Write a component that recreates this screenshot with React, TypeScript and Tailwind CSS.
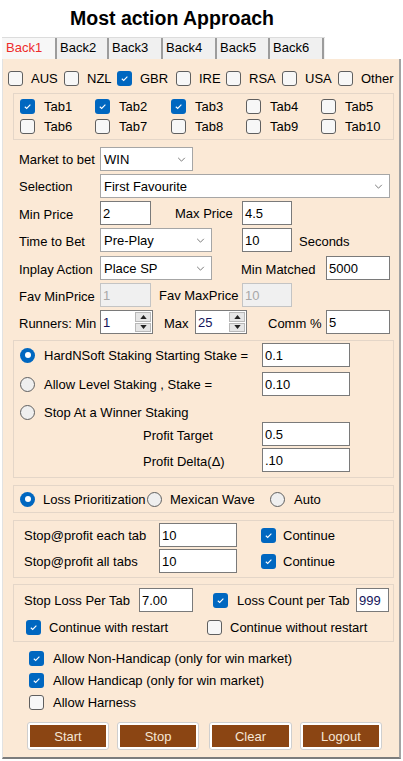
import { FC, ReactNode } from "react"

const Check: FC<{ checked?: boolean }> = ({ checked }) => checked
    ? <span className="flex h-[15px] w-[15px] shrink-0 items-center justify-center rounded-[3px] bg-[#0067c0]">
        <svg viewBox="0 0 10 10" className="h-[9px] w-[9px]"><path d="M2 5.3 L4.1 7.2 L8.2 2.9" fill="none" stroke="white" strokeWidth="1.2" /></svg>
    </span>
    : <span className="h-[15px] w-[15px] shrink-0 rounded-[3px] border border-[#5f5f5f] bg-[#f7f7f7]" />

const Radio: FC<{ checked?: boolean }> = ({ checked }) => checked
    ? <span className="flex h-[15px] w-[15px] shrink-0 items-center justify-center rounded-full bg-[#0067c0]">
        <span className="h-[6px] w-[6px] rounded-full bg-white" />
    </span>
    : <span className="h-[15px] w-[15px] shrink-0 rounded-full border border-[#5f5f5f] bg-[#efefef]" />

const TextBox: FC<{ value: string, className: string, disabled?: boolean }> = ({ value, className, disabled }) =>
    <div className={`flex h-[24px] shrink-0 items-center pl-[2px] ${disabled ? "border border-[#c4c4c4] bg-[#f0f0f0] text-[#a8a8a8]" : "border border-[#7a7a7a] bg-white"} ${className}`}>
        {value}
    </div>

const Chevron = () => <svg viewBox="0 0 10 6" className="h-[5px] w-[9px]"><path d="M1 1 L5 5 L9 1" fill="none" stroke="#606060" strokeWidth="1" /></svg>

const Combo: FC<{ value: string, className: string }> = ({ value, className }) =>
    <div className={`flex h-[24px] shrink-0 items-center justify-between border border-[#a6a6a6] bg-white pl-[3px] pr-[6px] ${className}`}>
        <span>{value}</span>
        <Chevron />
    </div>

const Spin: FC<{ value: string, className: string }> = ({ value, className }) =>
    <div className={`flex h-[24px] shrink-0 items-center justify-between border border-[#7a7a7a] bg-white pl-[2px] pr-[1px] text-[#14145a] ${className}`}>
        <span>{value}</span>
        <div className="flex h-[20px] w-[16px] flex-col gap-[1px]">
            <div className="flex flex-1 items-center justify-center border border-[#b8b8b8] bg-[#e6e6e6]">
                <svg viewBox="0 0 8 5" className="h-[4px] w-[7px]"><path d="M0 5 L4 0 L8 5 Z" fill="#222" /></svg>
            </div>
            <div className="flex flex-1 items-center justify-center border border-[#b8b8b8] bg-[#e6e6e6]">
                <svg viewBox="0 0 8 5" className="h-[4px] w-[7px]"><path d="M0 0 L4 5 L8 0 Z" fill="#222" /></svg>
            </div>
        </div>
    </div>

const Group: FC<{ className: string, children: ReactNode }> = ({ className, children }) =>
    <div className={`ml-[10px] w-[381px] border border-[#e4d6c8] ${className}`}>{children}</div>

const Btn: FC<{ label: string, className: string }> = ({ label, className }) =>
    <div className={`h-[28px] rounded-[3px] border border-[#cfcfcf] bg-white p-[2px] ${className}`}>
        <div className="flex h-full items-center justify-center bg-[#8b4513] text-[#f6e7d6]">{label}</div>
    </div>

const tabs = [
    { label: "Back1", w: "w-[55px] pl-[4px] bg-[#f7f7f7] text-[#ee2b2b]" },
    { label: "Back2", w: "w-[52px] pl-[3px]" },
    { label: "Back3", w: "w-[54px] pl-[3px]" },
    { label: "Back4", w: "w-[54px] pl-[3px]" },
    { label: "Back5", w: "w-[53px] pl-[3px]" },
    { label: "Back6", w: "w-[54px] pl-[3px]" },
]

const countries = [
    { label: "AUS", w: "w-[56px]" },
    { label: "NZL", w: "w-[53px]" },
    { label: "GBR", w: "w-[59px]", checked: true },
    { label: "IRE", w: "w-[50px]" },
    { label: "RSA", w: "w-[56px]" },
    { label: "USA", w: "w-[56px]" },
    { label: "Other", w: "w-[56px]" },
]

const tabBoxes = ["Tab1", "Tab2", "Tab3", "Tab4", "Tab5", "Tab6", "Tab7", "Tab8", "Tab9", "Tab10"]

export default function App() {
    return (
        <div className="h-[761px] w-[403px] overflow-hidden bg-white font-['Liberation_Sans',Arial,sans-serif] text-[13px] leading-[15px] text-black">
            <div className="flex h-[37px] items-center pl-[70px] pt-[1px] text-[19.5px] font-bold leading-none">Most action Approach</div>

            <div className="ml-[2px] flex h-[22px] w-[323px] border-t border-[#dcdcdc] bg-[#f0f0f0]">
                {tabs.map(t =>
                    <div key={t.label} className={`flex items-center border-r-2 border-[#9c9c9c] pb-[3px] ${t.w}`}>{t.label}</div>
                )}
            </div>

            <div className="ml-[2px] h-[700px] w-[399px] border-b-2 border-l border-r-2 border-b-[#7c7c7c] border-l-[#e2e2e2] border-r-[#a3a3a3] bg-[#fbe9d6] pt-[9px]">
                {/* countries */}
                <div className="flex h-[20px] items-center pl-[5px]">
                    {countries.map(c =>
                        <div key={c.label} className={`flex items-center gap-[8px] ${c.w}`}>
                            <Check checked={c.checked} />
                            <span>{c.label}</span>
                        </div>
                    )}
                </div>

                <Group className="mt-[5px] grid h-[47px] grid-cols-[75px_76px_75px_75px_75px] content-start pl-[6px] pt-[2px]">
                    {tabBoxes.map((t, i) =>
                        <div key={t} className="flex h-[20px] items-center gap-[9px]">
                            <Check checked={i < 3} />
                            <span>{t}</span>
                        </div>
                    )}
                </Group>

                {/* main form */}
                <div className="pl-[16px]">
                    <div className="mt-[7px] flex h-[24px] items-center">
                        <span className="w-[81px]">Market to bet</span>
                        <Combo value="WIN" className="w-[93px]" />
                    </div>
                    <div className="mt-[3px] flex h-[24px] items-center">
                        <span className="w-[81px]">Selection</span>
                        <Combo value="First Favourite" className="w-[290px]" />
                    </div>
                    <div className="mt-[3px] flex h-[24px] items-center">
                        <span className="w-[81px] pt-[2px]">Min Price</span>
                        <TextBox value="2" className="w-[51px]" />
                        <span className="ml-[24px] w-[67px]">Max Price</span>
                        <TextBox value="4.5" className="w-[50px]" />
                    </div>
                    <div className="mt-[3px] flex h-[24px] items-center">
                        <span className="w-[81px] pt-[2px]">Time to Bet</span>
                        <Combo value="Pre-Play" className="w-[112px]" />
                        <TextBox value="10" className="ml-[30px] w-[50px]" />
                        <span className="ml-[7px] pt-[2px]">Seconds</span>
                    </div>
                    <div className="mt-[4px] flex h-[24px] items-center">
                        <span className="w-[81px] pt-[2px]">Inplay Action</span>
                        <Combo value="Place SP" className="w-[112px]" />
                        <span className="ml-[29px] w-[85px] pt-[2px]">Min Matched</span>
                        <TextBox value="5000" className="w-[64px]" />
                    </div>
                    <div className="mt-[3px] flex h-[24px] items-center">
                        <span className="w-[81px] pt-[2px]">Fav MinPrice</span>
                        <TextBox value="1" className="w-[51px]" disabled />
                        <span className="ml-[8px] w-[83px]">Fav MaxPrice</span>
                        <TextBox value="10" className="w-[50px]" disabled />
                    </div>
                    <div className="mt-[3px] flex h-[24px] items-center">
                        <span className="w-[81px] pt-[2px]">Runners: Min</span>
                        <Spin value="1" className="w-[53px]" />
                        <span className="ml-[11px] w-[31px] pt-[2px]">Max</span>
                        <Spin value="25" className="w-[52px]" />
                        <span className="ml-[21px] w-[58px] pt-[2px]">Comm %</span>
                        <TextBox value="5" className="w-[64px]" />
                    </div>
                </div>

                {/* staking */}
                <Group className="mt-[6px] pb-[5px] pl-[6px] pt-[2px]">
                    <div className="flex h-[24px] items-center">
                        <Radio checked />
                        <span className="ml-[9px] w-[218px]">HardNSoft Staking Starting Stake =</span>
                        <TextBox value="0.1" className="w-[88px]" />
                    </div>
                    <div className="mt-[5px] flex h-[24px] items-center">
                        <Radio />
                        <span className="ml-[9px] w-[218px]">Allow Level Staking , Stake =</span>
                        <TextBox value="0.10" className="w-[88px]" />
                    </div>
                    <div className="mt-[6px] flex h-[20px] items-center">
                        <Radio />
                        <span className="ml-[9px]">Stop At a Winner Staking</span>
                    </div>
                    <div className="flex h-[24px] items-center pl-[123px]">
                        <span className="w-[119px] pt-[2px]">Profit Target</span>
                        <TextBox value="0.5" className="w-[88px]" />
                    </div>
                    <div className="mt-[2px] flex h-[24px] items-center pl-[123px]">
                        <span className="w-[119px] pt-[2px]">Profit Delta(Δ)</span>
                        <TextBox value=".10" className="w-[88px]" />
                    </div>
                </Group>

                {/* mode */}
                <Group className="mt-[7px] flex h-[28px] items-center pl-[6px]">
                    <div className="flex w-[127px] items-center gap-[8px]"><Radio checked /><span>Loss Prioritization</span></div>
                    <div className="flex w-[123px] items-center gap-[8px]"><Radio /><span>Mexican Wave</span></div>
                    <div className="flex items-center gap-[9px]"><Radio /><span>Auto</span></div>
                </Group>

                {/* stop at profit */}
                <Group className="mt-[7px] pb-[4px] pl-[10px] pt-[2px]">
                    <div className="flex h-[24px] items-center">
                        <span className="w-[135px]">Stop@profit each tab</span>
                        <TextBox value="10" className="w-[78px]" />
                        <div className="ml-[24px] flex items-center gap-[7px]"><Check checked /><span>Continue</span></div>
                    </div>
                    <div className="mt-[2px] flex h-[24px] items-center">
                        <span className="w-[135px]">Stop@profit all tabs</span>
                        <TextBox value="10" className="w-[78px]" />
                        <div className="ml-[24px] flex items-center gap-[7px]"><Check checked /><span>Continue</span></div>
                    </div>
                </Group>

                {/* stop loss */}
                <Group className="mt-[6px] pb-[4px] pt-[3px]">
                    <div className="flex h-[24px] items-center pl-[10px]">
                        <span className="w-[115px]">Stop Loss Per Tab</span>
                        <TextBox value="7.00" className="w-[54px]" />
                        <div className="ml-[20px] flex w-[143px] items-center gap-[9px]"><Check checked /><span>Loss Count per Tab</span></div>
                        <TextBox value="999" className="w-[33px] text-[#14145a]" />
                    </div>
                    <div className="mt-[5px] flex h-[20px] items-center pl-[12px]">
                        <div className="flex w-[181px] items-center gap-[8px]"><Check checked /><span>Continue with restart</span></div>
                        <div className="flex items-center gap-[8px]"><Check /><span>Continue without restart</span></div>
                    </div>
                </Group>

                {/* allow */}
                <div className="mt-[5px] pl-[26px]">
                    <div className="flex h-[22px] items-center gap-[9px]"><Check checked /><span>Allow Non-Handicap (only for win market)</span></div>
                    <div className="flex h-[22px] items-center gap-[9px]"><Check checked /><span>Allow Handicap (only for win market)</span></div>
                    <div className="flex h-[22px] items-center gap-[9px]"><Check /><span>Allow Harness</span></div>
                </div>

                <div className="mt-[9px] flex pl-[24px]">
                    <Btn label="Start" className="w-[82px]" />
                    <Btn label="Stop" className="ml-[8px] w-[82px]" />
                    <Btn label="Clear" className="ml-[10px] w-[83px]" />
                    <Btn label="Logout" className="ml-[8px] w-[82px]" />
                </div>
            </div>
        </div>
    )
}
